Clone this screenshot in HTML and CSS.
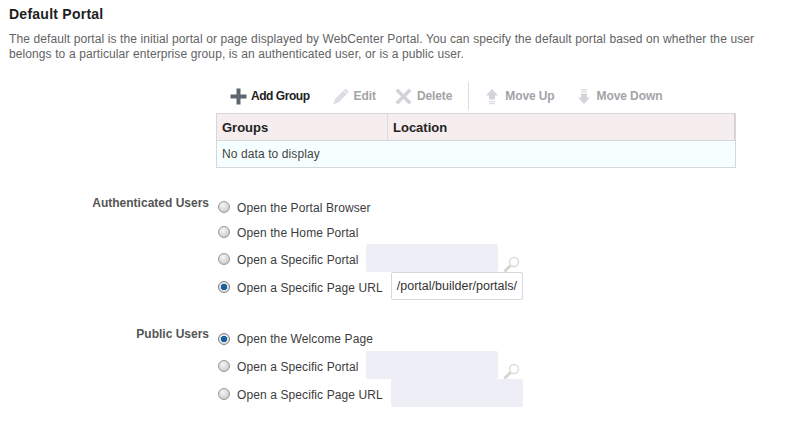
FILE: index.html
```html
<!DOCTYPE html>
<html lang="en">
<head>
<meta charset="utf-8">
<title>Default Portal</title>
<link rel="stylesheet" href="styles.css">
</head>
<body>
<main class="page">
  <h1 class="title">Default Portal</h1>
  <p class="intro">The default portal is the initial portal or page displayed by WebCenter Portal. You can specify the default portal based on whether the user belongs to a particular enterprise group, is an authenticated user, or is a public user.</p>

  <section class="groups">
    <div class="toolbar">
      <button class="tool tool-add" type="button">
        <svg class="icon" width="17" height="17" viewBox="0 0 17 17"><path d="M6.500 0.500h4v6h6v4h-6v6h-4v-6h-6v-4h6z" fill="#5f6670"/></svg>
        <span>Add Group</span>
      </button>
      <button class="tool tool-edit" type="button">
        <svg class="icon" width="17" height="17" viewBox="0 0 17 17"><path d="M12.500 0.500l3.500 3.500-10 10-6 2.500 2.500-6z" fill="#dcdde2"/><path d="M11 2.500l3.500 3.500" stroke="#fff" stroke-width="1"/></svg>
        <span>Edit</span>
      </button>
      <button class="tool tool-delete" type="button">
        <svg class="icon" width="17" height="17" viewBox="0 0 17 17"><path d="M3 0.500L8.500 6L14 0.500L16.500 3L11 8.500L16.500 14L14 16.500L8.500 11L3 16.500L0.500 14L6 8.500L0.500 3z" fill="#d3d4da"/></svg>
        <span>Delete</span>
      </button>
      <span class="divider"></span>
      <button class="tool tool-up" type="button">
        <svg class="icon" width="14" height="17" viewBox="0 0 14 17"><path d="M7 1l6 6.500h-3v4h-6v-4h-3z" fill="#d3d4da"/><path d="M4 13h6v1.200h-6zM4 15h6v1.200h-6z" fill="#dcdde2"/></svg>
        <span>Move Up</span>
      </button>
      <button class="tool tool-down" type="button">
        <svg class="icon" width="14" height="17" viewBox="0 0 14 17"><path d="M7 16l-6-6.500h3v-4h6v4h3z" fill="#d3d4da"/><path d="M4 1h6v1.200h-6zM4 3h6v1.200h-6z" fill="#dcdde2"/></svg>
        <span>Move Down</span>
      </button>
    </div>
    <div class="table">
      <div class="thead">
        <div class="th th-groups">Groups</div>
        <div class="th th-location">Location</div>
      </div>
      <div class="empty">No data to display</div>
    </div>
  </section>

  <form class="choices">
    <div class="choice-group group-auth">
      <div class="group-label">Authenticated Users</div>
      <div class="options">
        <label class="option opt-a"><input type="radio" name="auth"><span>Open the Portal Browser</span></label>
        <label class="option opt-b"><input type="radio" name="auth"><span>Open the Home Portal</span></label>
        <div class="option opt-field">
          <label class="inline"><input type="radio" name="auth"><span>Open a Specific Portal</span></label>
          <span class="field field-off field-lookup"></span>
          <svg class="search" width="18" height="17" viewBox="0 0 18 17"><circle cx="11" cy="7" r="4.500" fill="none" stroke="#dcdcdc" stroke-width="1.500"/><path d="M7.500 10.500l-6 6" stroke="#d8d3cc" stroke-width="3"/></svg>
        </div>
        <div class="option opt-field">
          <label class="inline"><input type="radio" name="auth" checked><span>Open a Specific Page URL</span></label>
          <span class="field field-on">/portal/builder/portals/</span>
        </div>
      </div>
    </div>
    <div class="choice-group group-public">
      <div class="group-label">Public Users</div>
      <div class="options">
        <label class="option opt-c"><input type="radio" name="pub" checked><span>Open the Welcome Page</span></label>
        <div class="option opt-field">
          <label class="inline"><input type="radio" name="pub"><span>Open a Specific Portal</span></label>
          <span class="field field-off field-lookup"></span>
          <svg class="search" width="18" height="17" viewBox="0 0 18 17"><circle cx="11" cy="7" r="4.500" fill="none" stroke="#dcdcdc" stroke-width="1.500"/><path d="M7.500 10.500l-6 6" stroke="#d8d3cc" stroke-width="3"/></svg>
        </div>
        <div class="option opt-field">
          <label class="inline"><input type="radio" name="pub"><span>Open a Specific Page URL</span></label>
          <span class="field field-off"></span>
        </div>
      </div>
    </div>
  </form>
</main>
</body>
</html>
```
FILE: styles.css
```css
* { box-sizing: border-box; }
html, body { margin: 0; padding: 0; background: #fff; }
body { font-family: "Liberation Sans", Arial, sans-serif; font-size: 12px; color: #3c3c3c; }
.page { width: 787px; height: 437px; overflow: hidden; padding: 7px 9px 0; }

.title { margin: 0; font-size: 14px; line-height: 15px; font-weight: bold; letter-spacing: 0.25px; color: #1e1e1e; }
.intro { margin: 9px 0 0; padding-top: 1px; width: 762px; line-height: 15px; letter-spacing: 0.09px; word-spacing: 0.1px; color: #636363; }

.groups { margin: 20px 0 0 207px; width: 520px; }
.toolbar { display: flex; align-items: center; height: 28px; }
.tool { display: flex; align-items: center; gap: 4px; height: 28px; padding: 0; border: 0; background: none; font: bold 12px "Liberation Sans", Arial, sans-serif; letter-spacing: -0.1px; color: #a3a3a8; }
.tool-add { margin-left: 14px; letter-spacing: -0.45px; color: #222; }
.tool-edit { margin-left: 23px; }
.tool-delete { margin-left: 19px; gap: 5px; }
.tool-up { margin-left: 16px; gap: 6px; }
.tool-down { margin-left: 22px; gap: 6px; }
.divider { width: 1px; height: 28px; margin-left: 16px; background: #dcdcdc; }

.table { margin-top: 3px; border: 1px solid #d6d6dc; }
.thead { display: flex; height: 27px; background: #f6eeee; border-right: 1px solid #cfcfd4; border-bottom: 1px solid #d6d6dc; }
.th { display: flex; align-items: center; padding-left: 5px; font-size: 13px; font-weight: bold; color: #222; }
.th-groups { width: 171px; border-right: 1px solid #dcdce0; }
.empty { display: flex; align-items: center; height: 26px; padding-left: 5px; letter-spacing: 0.1px; background: #f6ffff; color: #444; }

.choices { margin-top: 25px; margin-left: -9px; }
.choice-group { display: flex; }
.group-public { margin-top: 24px; }
.group-label { width: 209px; padding-top: 3px; text-align: right; font-weight: bold; color: #555; line-height: 15px; }
.options { display: flex; flex-direction: column; padding-left: 9px; padding-top: 1px; letter-spacing: 0.1px; }
.group-public .options { padding-top: 0; }
.option { display: flex; align-items: center; height: 28px; }
.opt-a { height: 26px; }
.opt-b { height: 24px; }
.opt-c { height: 27px; padding-top: 2px; }
.inline { display: flex; align-items: center; padding-top: 2px; }
.inline span, .option > span { white-space: nowrap; }
.inline span, .opt-a span, .opt-b span { padding-top: 2px; }

input[type="radio"] {
  appearance: none;
  width: 12px; height: 12px; margin: 0 7px 0 0; flex: none;
  border-radius: 50%;
  border: 1px solid #9a9a9a;
  background: radial-gradient(circle at 40% 35%, #f6f6f6 0, #d8d8d8 55%, #b8b8b8 100%);
}
input[type="radio"]:checked {
  border-color: #7f8288;
  background: radial-gradient(circle at 50% 50%, #0f4f8f 0, #1f6fb5 28%, #0d4a80 40%, #e8e8e8 50%, #c8c8c8 100%);
}

.field { display: block; width: 132px; height: 28px; margin-left: 8px; border-radius: 2px; }
.field-off { background: #eeeef7; }
.field-lookup { margin-left: 7px; }
.field-on { padding: 0 5px; font-size: 12.5px; letter-spacing: 0; line-height: 26px; border: 1px solid #d6d6dc; background: #fff; color: #333; white-space: nowrap; overflow: hidden; }
.search { margin-left: 5px; align-self: flex-end; }
```
